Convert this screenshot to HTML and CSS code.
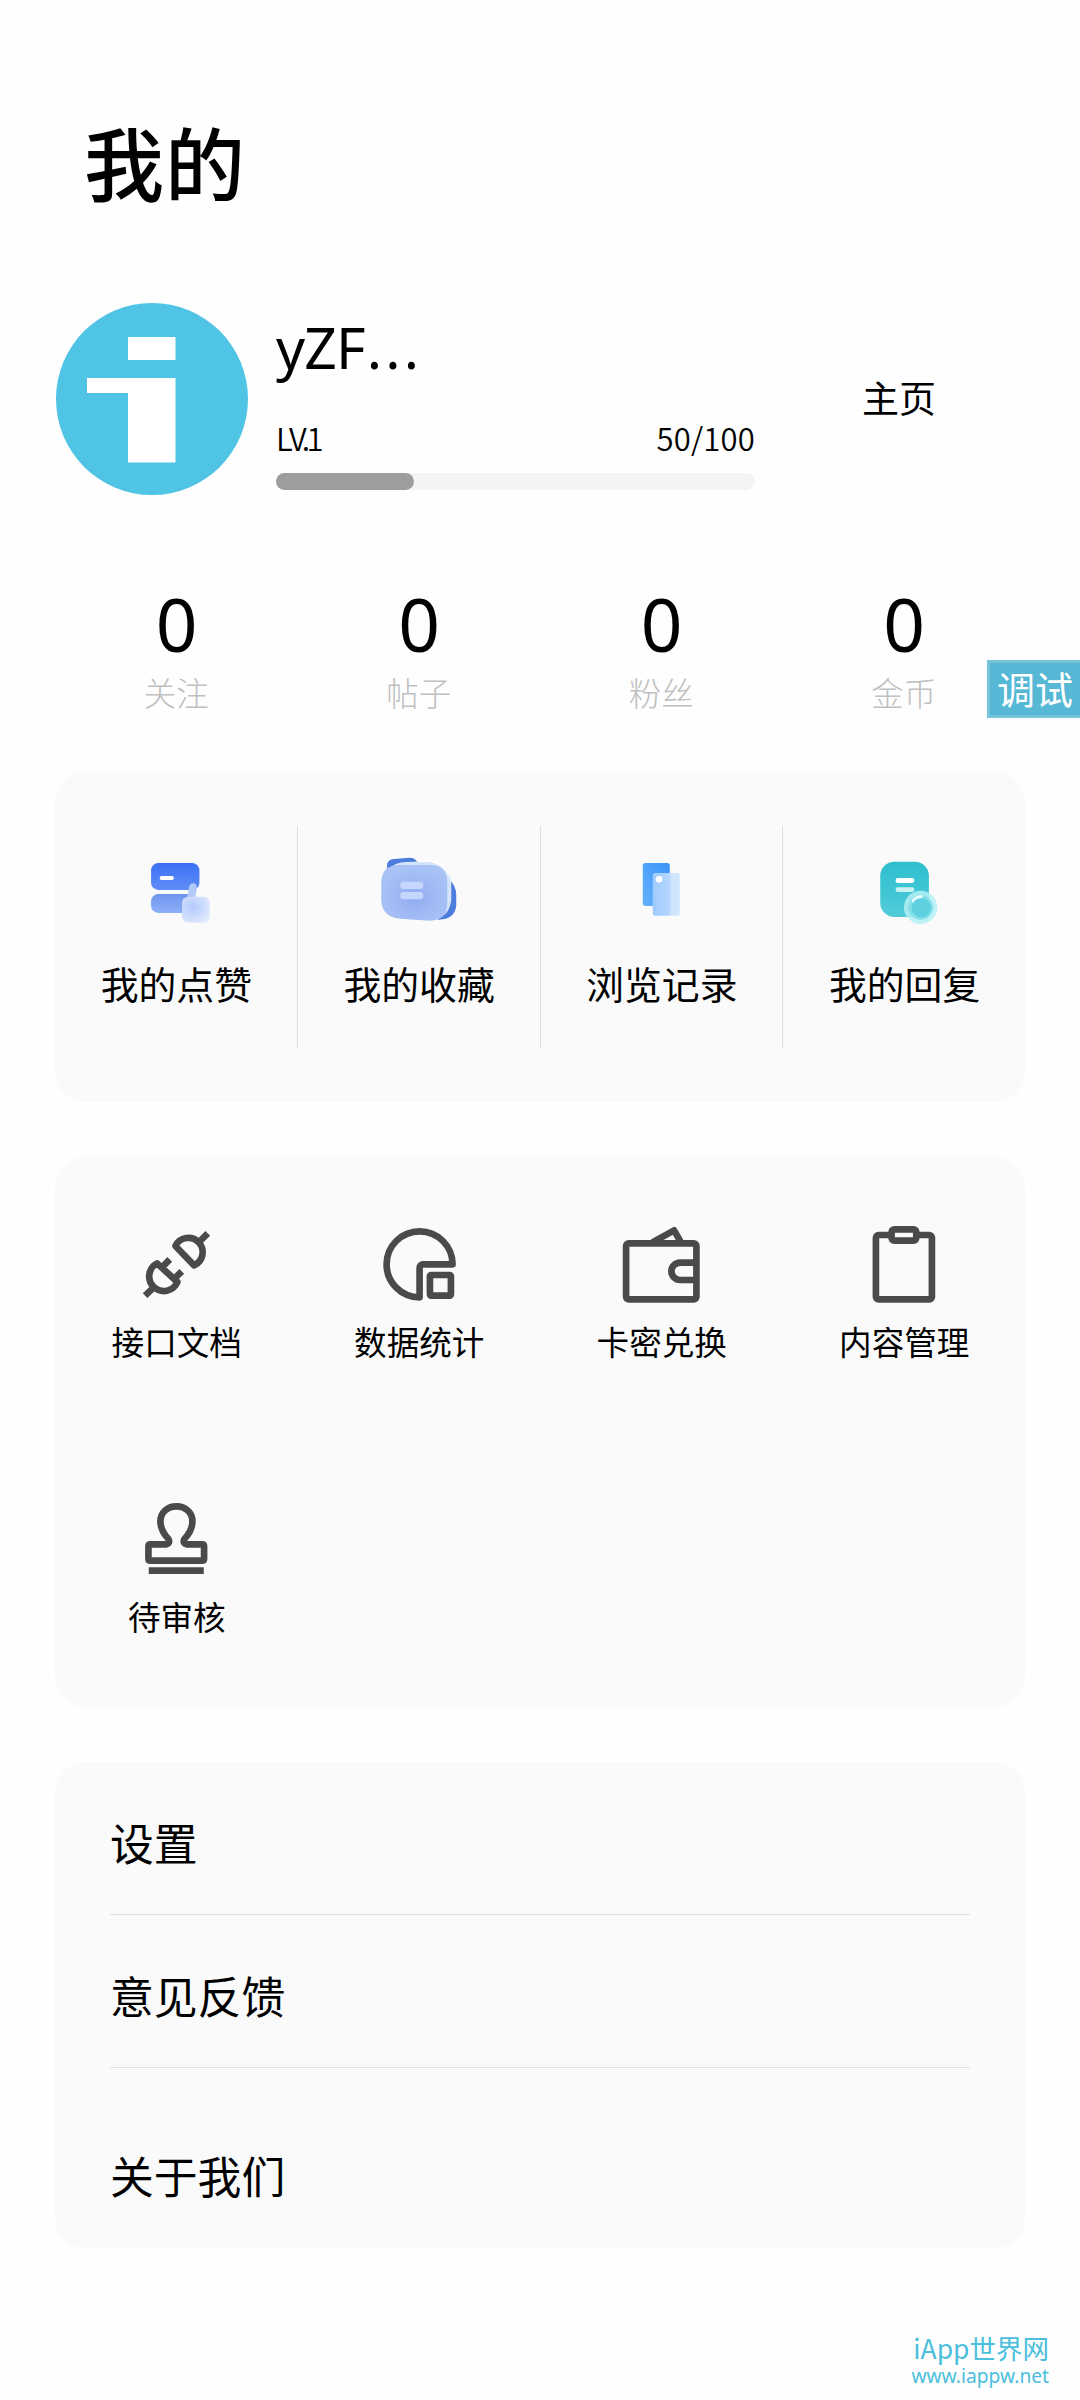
FILE: index.html
```html
<!DOCTYPE html>
<html lang="zh-CN">
<head>
<meta charset="utf-8">
<title>我的</title>
<link rel="stylesheet" href="styles.css">
</head>
<body>
<main class="page">
  <h1 class="title">我的</h1>

  <section class="profile">
    <svg class="avatar" viewBox="0 0 192 192">
      <circle cx="96" cy="96" r="96" fill="#4fc4e4"/>
      <path d="M72 34h47.500v23H72zM31 75h88.500v84.500H72V90H31z" fill="#fff"/>
    </svg>
    <div class="info">
      <div class="name">yZF<span class="dots">...</span></div>
      <div class="level"><span class="lv">LV<span class="tight">.</span>1</span><span class="exp">50/100</span></div>
      <div class="bar"><div class="fill"></div></div>
    </div>
    <a class="home">主页</a>
  </section>

  <section class="stats">
    <div class="stat"><b class="num">0</b><span class="cap">关注</span></div>
    <div class="stat"><b class="num">0</b><span class="cap">帖子</span></div>
    <div class="stat"><b class="num">0</b><span class="cap">粉丝</span></div>
    <div class="stat"><b class="num">0</b><span class="cap">金币</span></div>
  </section>

  <section class="card quick">
    <div class="cell">
      <svg class="icon" viewBox="243.750 225 270 270">
        <defs>
          <linearGradient id="g1" x2="0" y2="1"><stop stop-color="#3b71f4"/><stop offset="1" stop-color="#5f8df7"/></linearGradient>
          <linearGradient id="g2" x2="0" y2="1"><stop stop-color="#6f94ec"/><stop offset="1" stop-color="#8db0fa"/></linearGradient>
          <radialGradient id="g3" cx=".38" cy=".4" r=".7"><stop stop-color="#b1c9fc"/><stop offset="1" stop-color="#e1eafd"/></radialGradient>
        </defs>
        <rect x="304" y="279" width="145" height="81" rx="22" fill="url(#g1)"/>
        <rect x="330" y="318" width="42" height="12" rx="5" fill="#fff"/>
        <path d="M326 372H421V429H326a22 22 0 0 1-22-22v-13a22 22 0 0 1 22-22z" fill="url(#g2)"/>
        <path d="M418 352q2-12 13-12 12 2 10 16l-4 26h-24z" fill="#b5cafa"/>
        <rect x="397" y="380" width="83" height="78" rx="18" fill="url(#g3)"/>
      </svg>
      <span class="label">我的点赞</span>
    </div>
    <div class="cell">
      <svg class="icon" viewBox="971.250 225 270 270">
        <defs>
          <radialGradient id="g4" cx=".5" cy=".58" r=".6"><stop stop-color="#8eaaf0"/><stop offset=".5" stop-color="#a1b9f4"/><stop offset="1" stop-color="#a9c3f6"/></radialGradient>
        </defs>
        <path d="M1010 310V288q0-20 22-21l45-4q16-1 24 13z" fill="#4c7cdc"/>
        <path d="M1195 328q23 18 23 48v30q-4 44-55 43z" fill="#4c7cdc"/>
        <path d="M1012 300q22-24 55-24l70-2q66 6 66 66v50q-6 50-50 58z" fill="#d4e4fd"/>
        <path d="M1100 276q24-10 62 0 34 12 38 50-18-42-60-50z" fill="#fff"/>
        <path d="M1047 285h95q49 0 49 55v60q0 52-52 52l-90-6q-56-5-56-58v-48q0-55 54-55z" fill="url(#g4)"/>
        <rect x="1050" y="335" width="69" height="22" rx="10" fill="#c5d7fc"/>
        <rect x="1050" y="366" width="69" height="22" rx="10" fill="#c5d7fc"/>
      </svg>
      <span class="label">我的收藏</span>
    </div>
    <div class="cell">
      <svg class="icon" viewBox="228.750 225 270 270">
        <defs>
          <linearGradient id="g5" x1="1" x2="0" y2="1"><stop stop-color="#3a94f7"/><stop offset="1" stop-color="#67b1fc"/></linearGradient>
          <linearGradient id="g6" x2="1" y2="0"><stop stop-color="#9ecbfd"/><stop offset=".6" stop-color="#b3d6fe"/><stop offset=".7" stop-color="#d0e5fe"/></linearGradient>
        </defs>
        <rect x="309" y="279" width="81" height="129" rx="8" fill="url(#g5)"/>
        <rect x="339" y="309" width="81" height="128" rx="8" fill="url(#g6)"/>
        <circle cx="358" cy="328" r="10" fill="#fff"/>
      </svg>
      <span class="label">浏览记录</span>
    </div>
    <div class="cell">
      <svg class="icon" viewBox="956.250 225 270 270">
        <defs>
          <linearGradient id="g7" x2="0" y2="1"><stop stop-color="#2cbfce"/><stop offset="1" stop-color="#53cbd9"/></linearGradient>
        </defs>
        <rect x="1020" y="275" width="146" height="166" rx="43" fill="url(#g7)"/>
        <rect x="1066" y="324" width="56" height="15" rx="7" fill="#fff"/>
        <rect x="1066" y="352" width="56" height="14" rx="7" fill="#c9f2f5"/>
        <circle cx="1141" cy="412" r="50" fill="#b4f0f5" fill-opacity=".85"/>
        <circle cx="1141" cy="412" r="37" fill="#82dfe9"/>
        <circle cx="1143" cy="413" r="29" fill="#5fd0dd"/>
        <path d="M1118 393q8-13 26-13" fill="none" stroke="#e8fcfd" stroke-width="8" stroke-linecap="round"/>
      </svg>
      <span class="label">我的回复</span>
    </div>
  </section>

  <section class="card tools">
    <div class="tool">
      <svg class="icon line" viewBox="243.750 210 270 270">
        <path d="M377 288L433 346A43 43 0 1 0 377 288z"/>
        <path d="M448 276l26-26"/>
        <path d="M322 340l61 56A44 44 0 1 1 322 340zM338 351l22-23M374 386l22-22M312 412l-26 25"/>
      </svg>
      <span class="text">接口文档</span>
    </div>
    <div class="tool">
      <svg class="icon line" viewBox="971.250 210 270 270">
        <path d="M1207 343A99 99 0 1 0 1108 442V353a10 10 0 0 1 10-10z"/>
        <rect x="1139" y="375" width="63" height="62" rx="4"/>
      </svg>
      <span class="text">数据统计</span>
    </div>
    <div class="tool">
      <svg class="icon line" viewBox="228.750 210 270 270">
        <rect x="259" y="280" width="211" height="168" rx="8"/>
        <path d="M470 338H421a26 26 0 0 0 0 52H470M338 277l65-36 21 37"/>
      </svg>
      <span class="text">卡密兑换</span>
    </div>
    <div class="tool">
      <svg class="icon line" viewBox="956.250 210 270 270">
        <rect x="1007" y="255" width="168" height="193" rx="8"/>
        <rect x="1054" y="238" width="74" height="34" rx="8" fill="#fafafa"/>
      </svg>
      <span class="text">内容管理</span>
    </div>
    <div class="tool">
      <svg class="icon line" viewBox="243.750 75 270 270">
        <path d="M302 223H350Q362 220 356 207C340 190 332 175 332 154C332 128 352 109 380 109C408 109 428 128 428 154C428 175 420 190 404 207Q398 220 410 223H457Q463 223 463 229V266Q463 272 457 272H302Q296 272 296 266V229Q296 223 302 223z"/>
        <path d="M297 302H462"/>
      </svg>
      <span class="text">待审核</span>
    </div>
  </section>

  <section class="card list">
    <div class="row">设置</div>
    <div class="row">意见反馈</div>
    <div class="row last">关于我们</div>
  </section>

  <footer class="mark">
    <span class="site">iApp世界网</span>
    <span class="url">www.iappw.net</span>
  </footer>
  <div class="debug">调试</div>
</main>
</body>
</html>
```
FILE: styles.css
```css
* { box-sizing: border-box; }
body {
  margin: 0;
  background: #fefefe;
  color: #000;
  font-family: "Noto Sans CJK SC", sans-serif;
}
.page {
  position: relative;
  width: 1080px;
  height: 2400px;
  padding: 111px 55px 0;
  overflow: hidden;
}
.title {
  margin: 0 0 0 29px;
  height: 192px;
  font-size: 80px;
  line-height: 98px;
  letter-spacing: 1px;
  font-weight: 500;
}
.profile {
  display: flex;
  height: 192px;
  margin-bottom: 80px;
  padding-left: 1px;
}
.avatar { width: 192px; height: 192px; flex: none; }
.info { width: 479px; margin-left: 28px; }
.name {
  height: 112px;
  padding-top: 6px;
  font-family: "Noto Sans", sans-serif;
  font-size: 57px;
  line-height: 76px;
  font-weight: 450;
  letter-spacing: -0.8px;
}
.dots { letter-spacing: 3.2px; margin-left: 2px; }
.level {
  display: flex;
  justify-content: space-between;
  height: 58px;
  font-size: 31px;
  line-height: 46px;
}
.lv { letter-spacing: -1px; font-weight: 350; }
.tight { margin-left: -4px; letter-spacing: -3.5px; }
.exp { font-weight: 350; letter-spacing: 0.2px; }
.bar {
  height: 17px;
  border-radius: 9px;
  background: #f4f4f4;
}
.fill {
  width: 138px;
  height: 17px;
  border-radius: 9px;
  background: #9d9d9d;
}
.home {
  margin: 66px 0 0 107px;
  font-size: 37px;
  line-height: 56px;
}
.stats { display: flex; height: 197px; }
.stat {
  flex: 1;
  display: flex;
  flex-direction: column;
  align-items: center;
}
.num {
  height: 95px;
  padding-left: 1px;
  font-family: "Noto Sans", sans-serif;
  font-size: 73px;
  line-height: 97px;
  font-weight: 450;
}
.cap {
  font-size: 32.5px;
  line-height: 44px;
  font-weight: 300;
  color: #c0c0c0;
}
.card { border-radius: 30px; background: #fafafa; }
.quick {
  display: flex;
  height: 330px;
  margin-bottom: 55px;
  padding: 54px 0;
}
.cell {
  flex: 1;
  display: flex;
  flex-direction: column;
  align-items: center;
  padding-top: 19px;
  border-right: 1px solid #dedede;
}
.cell:last-child { border-right: 0; }
.icon { width: 90px; height: 90px; flex: none; }
.line {
  fill: none;
  stroke: #4a4a4a;
  stroke-width: 20;
  stroke-linejoin: round;
}
.label { margin-top: 23px; padding-left: 1px; font-size: 37.8px; line-height: 50px; }
.tools {
  display: grid;
  grid-template-columns: repeat(4, 1fr);
  grid-auto-rows: 275px;
  height: 550px;
  margin-bottom: 55px;
}
.tool {
  display: flex;
  flex-direction: column;
  align-items: center;
  padding-top: 63px;
}
.text { margin-top: 9px; padding-left: 1px; font-size: 32.6px; line-height: 44px; }
.list { height: 486px; padding: 0 55px; }
.row {
  padding: 50px 0 42px;
  border-bottom: 1px solid #e0e0e0;
  font-size: 43.8px;
  line-height: 60px;
}
.last { padding-top: 77px; border-bottom: 0; }
.mark {
  display: flex;
  flex-direction: column;
  align-items: flex-end;
  margin: 81px -24px 0 0;
  color: #4bbfdc;
}
.site { font-size: 26.5px; line-height: 38px; }
.url { font-family: "Noto Sans", sans-serif; font-size: 19.2px; line-height: 18px; }
.debug {
  position: absolute;
  top: 660px;
  right: 0;
  width: 93px;
  height: 58px;
  border: 3px solid #75c5da;
  border-right: 0;
  background: #56b8d5;
  color: #fff;
  font-size: 38px;
  line-height: 49px;
  padding-left: 7px;
  white-space: nowrap;
}
```
